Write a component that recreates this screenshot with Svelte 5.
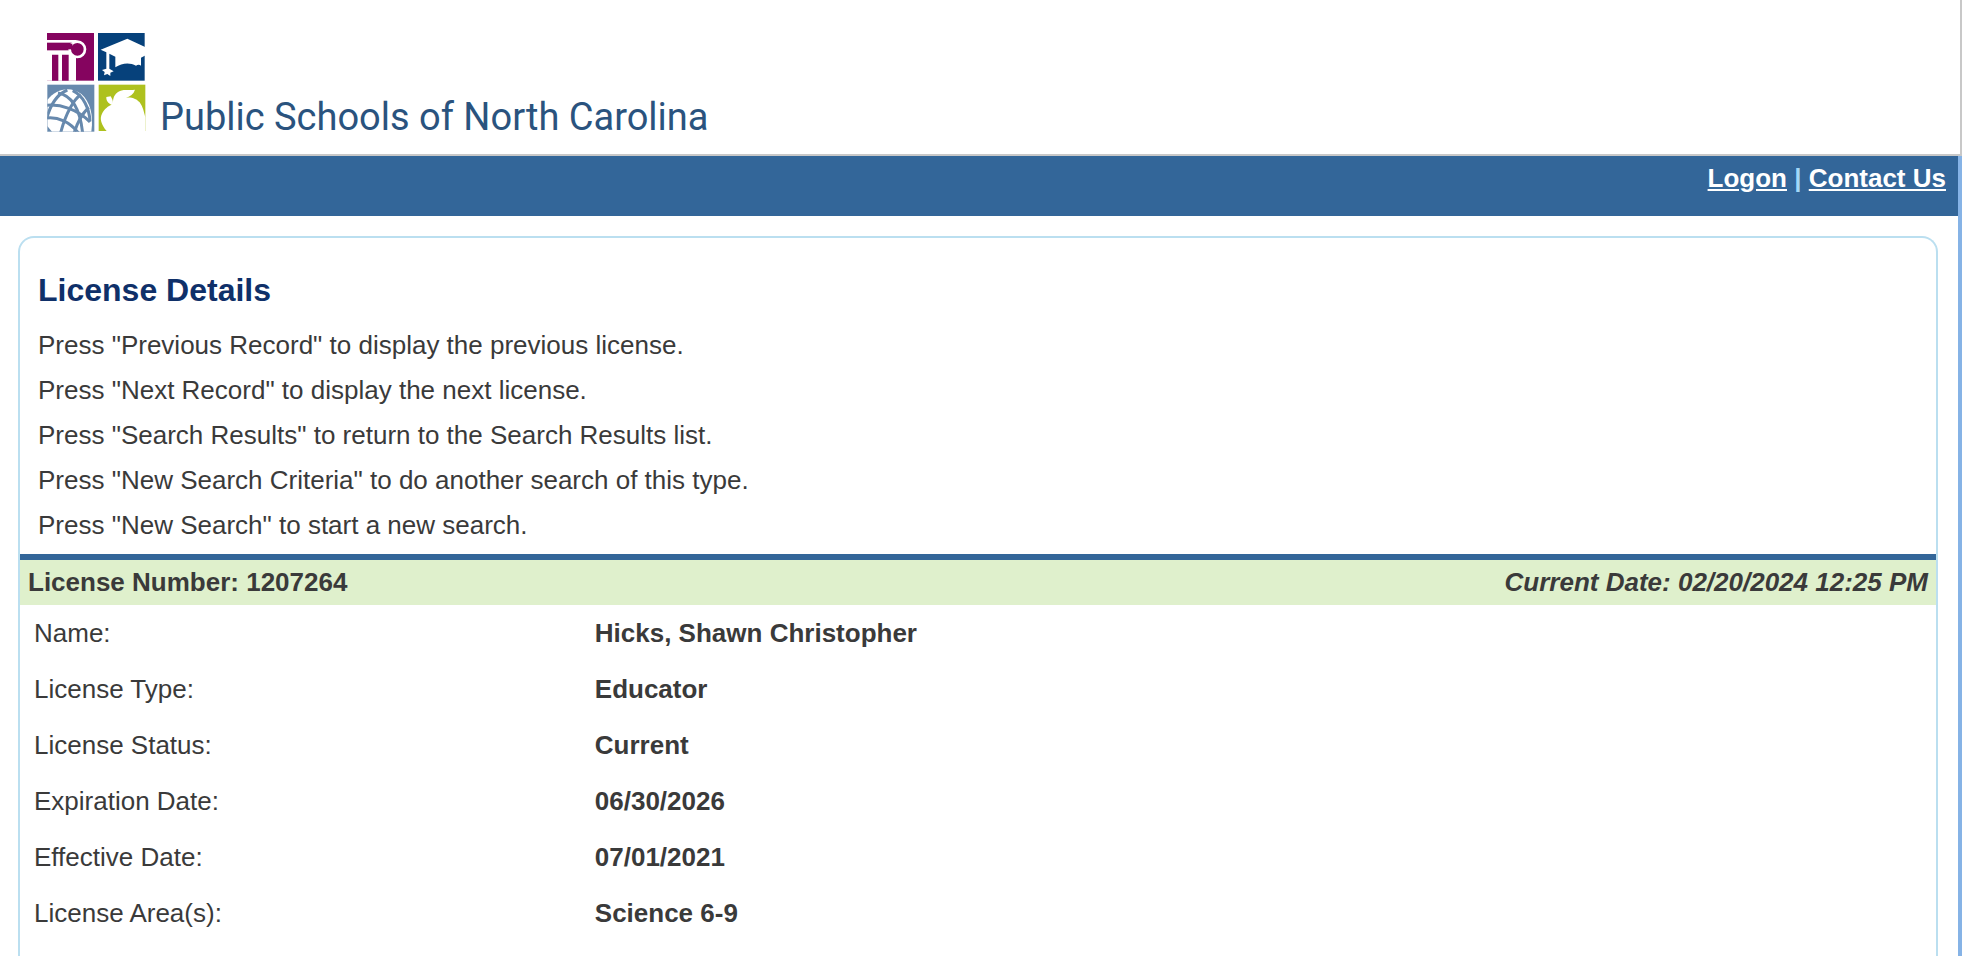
<script>
	const instructions = [
		'Press "Previous Record" to display the previous license.',
		'Press "Next Record" to display the next license.',
		'Press "Search Results" to return to the Search Results list.',
		'Press "New Search Criteria" to do another search of this type.',
		'Press "New Search" to start a new search.'
	];

	const license = {
		number: '1207264',
		currentDate: '02/20/2024 12:25 PM'
	};

	const details = [
		{ label: 'Name:', value: 'Hicks, Shawn Christopher' },
		{ label: 'License Type:', value: 'Educator' },
		{ label: 'License Status:', value: 'Current' },
		{ label: 'Expiration Date:', value: '06/30/2026' },
		{ label: 'Effective Date:', value: '07/01/2021' },
		{ label: 'License Area(s):', value: 'Science 6-9' }
	];
</script>

<div class="page">
	<header class="banner">
		<svg class="logo" viewBox="0 0 390 375" aria-hidden="true">
			<!-- column -->
			<rect x="51" y="39" width="141" height="143" fill="#85045f" />
			<path fill="#fff" d="M51 94H122L138 110V182H51Z" />
			<path fill="#85045f" d="M66 104H85V182H66ZM96 104H116V182H96Z" />
			<path fill="none" stroke="#fff" stroke-width="8" d="M51 64H140" />
			<circle cx="142" cy="88" r="23" fill="#85045f" stroke="#fff" stroke-width="8" />
			<rect x="51" y="71" width="76" height="17" fill="#85045f" />
			<path fill="none" stroke="#fff" stroke-width="6" d="M51 94H122" />

			<!-- mortarboard -->
			<rect x="204" y="39" width="140" height="143" fill="#06417b" />
			<path
				fill="#fff"
				d="M212 89L292 56L347 82V106L333 113V137C329 134 324 133 318 137C300 127 276 128 256 142V110L238 101V146L251 154L241 158L241 168L232 162L222 166L224 156L216 150L229 146V97Z"
			/>

			<!-- globe -->
			<clipPath id="globe">
				<rect x="52" y="194" width="141" height="141" />
			</clipPath>
			<rect x="52" y="194" width="141" height="141" fill="#6789ad" />
			<g clip-path="url(#globe)">
				<path fill="#fff" d="M52 240C80 204 122 198 154 222C180 244 191 285 184 335H52Z" />
				<g fill="none" stroke="#6789ad" stroke-width="9">
					<path d="M84 219C124 226 150 262 158 340" />
					<path d="M152 224C134 236 108 276 92 338" />
					<path d="M112 210C84 222 62 250 50 296" />
					<path d="M128 212C160 226 178 266 180 304" />
					<path d="M176 262C156 282 142 306 132 340" />
					<path d="M50 256C92 252 142 268 180 306" />
					<path d="M50 294C84 290 120 306 146 340" />
				</g>
				<path fill="#6789ad" d="M52 318L66 335H52Z" />
			</g>

			<!-- apple -->
			<rect x="206" y="194" width="140" height="139" fill="#aec11e" />
			<path
				fill="#fff"
				d="M230 333C214 313 208 296 216 281C223 266 235 258 245 254C235 251 228 242 229 231L242 229C247 237 249 243 249 249C248 230 257 217 272 212C287 208 301 212 315 209C311 222 301 230 286 233C305 230 321 237 329 247C339 260 342 278 346 292V333Z"
			/>
		</svg>
		<span class="brand">Public Schools of North Carolina</span>
	</header>

	<div class="body">
		<nav class="nav">
			<a href="#logon">Logon</a> <span class="divider">|</span> <a href="#contact">Contact Us</a>
		</nav>

		<main class="card">
			<div class="intro">
				<h1>License Details</h1>
				{#each instructions as line}
					<p>{line}</p>
				{/each}
			</div>

			<div class="summary">
				<span>License Number: {license.number}</span>
				<em>Current Date: {license.currentDate}</em>
			</div>

			<table>
				<tbody>
					{#each details as row}
						<tr>
							<th scope="row">{row.label}</th>
							<td>{row.value}</td>
						</tr>
					{/each}
				</tbody>
			</table>
		</main>
	</div>
</div>

<style>
	:global(body) {
		margin: 0;
		background: #fff;
	}

	.page {
		display: flex;
		flex-direction: column;
		min-height: 100vh;
		font-family: 'Liberation Sans', Arial, Helvetica, sans-serif;
		font-size: 26px;
		color: #3a3a3a;
	}

	.banner {
		display: flex;
		align-items: flex-end;
		padding: 20px 30px 9px;
		border-right: 2px solid #c8c8c8;
		border-bottom: 2px solid #c8c8c8;
	}

	.logo {
		width: 130px;
		height: 125px;
	}

	.brand {
		font-family: Roboto, sans-serif;
		font-size: 38px;
		line-height: 56px;
		color: #2a537e;
	}

	.body {
		display: flex;
		flex-direction: column;
		flex: 1;
		border-right: 4px solid #86b3e6;
	}

	.nav {
		box-sizing: border-box;
		height: 60px;
		padding: 7px 12px;
		background: #336699;
		line-height: 30px;
		font-weight: bold;
		text-align: right;
	}

	.nav a {
		color: #fff;
	}

	.divider {
		color: #a3d8f8;
	}

	.card {
		flex: 1;
		margin: 20px 20px 0 18px;
		border: 2px solid #bbdff0;
		border-bottom: 0;
		border-radius: 16px 16px 0 0;
	}

	.intro {
		padding: 28px 18px 6px;
	}

	h1 {
		margin: 0 0 9px;
		font-size: 32px;
		line-height: 48px;
		color: #0f3069;
	}

	p {
		margin: 0;
		line-height: 45px;
	}

	.summary {
		display: flex;
		justify-content: space-between;
		padding: 0 8px;
		border-top: 6px solid #336699;
		background: #dff0cc;
		line-height: 45px;
		font-weight: bold;
	}

	table {
		width: 100%;
		border-collapse: collapse;
		table-layout: fixed;
	}

	th,
	td {
		height: 56px;
		padding: 0;
		text-align: left;
	}

	th {
		width: 30%;
		padding-left: 14px;
		box-sizing: border-box;
		font-weight: normal;
	}

	td {
		font-weight: bold;
	}
</style>
